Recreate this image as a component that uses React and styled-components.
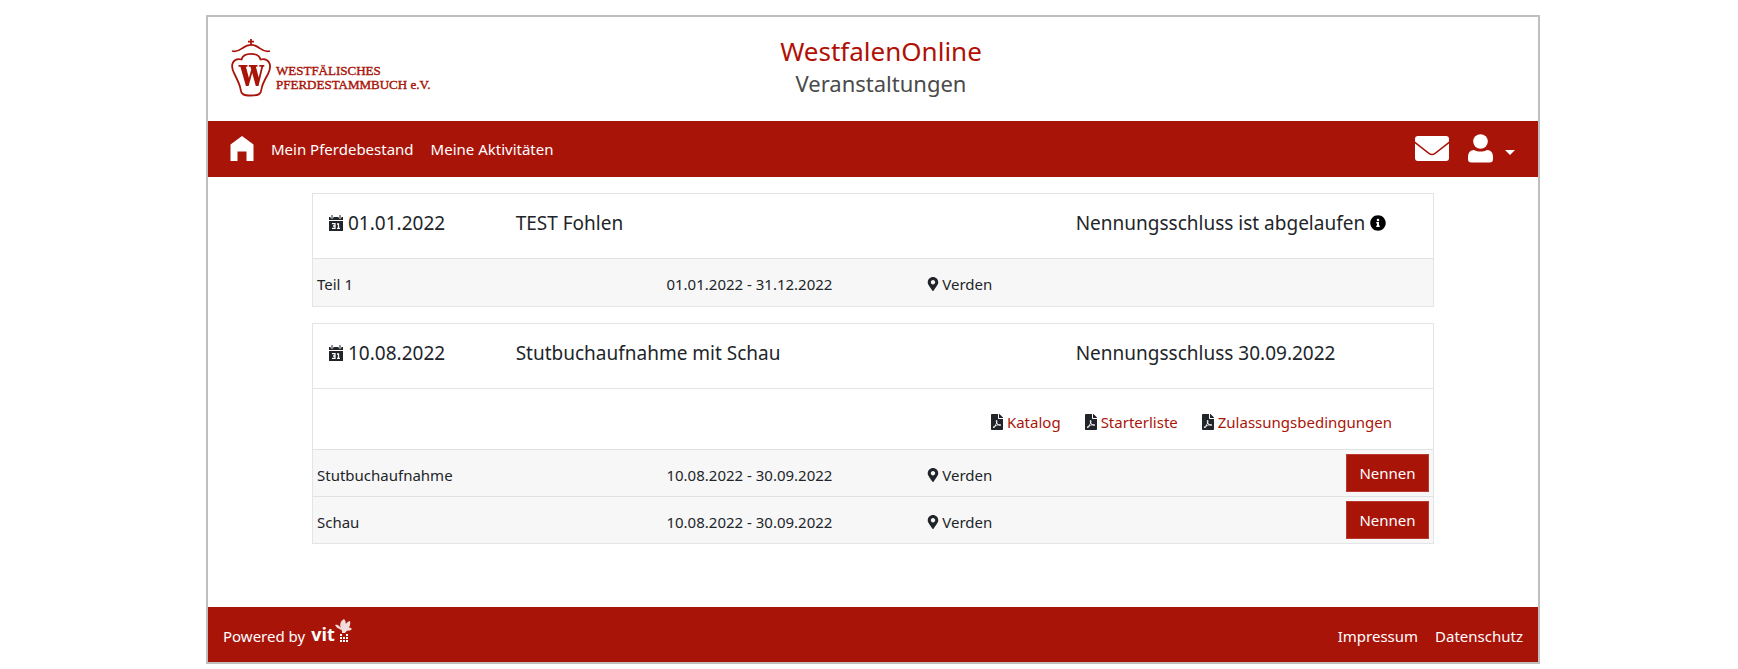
import React from "react";
import styled, { createGlobalStyle } from "styled-components";
import { FaFilePdf, FaMapMarkerAlt, FaInfoCircle } from "react-icons/fa";

const red = "#a91409";

const GlobalStyle = createGlobalStyle`
  *, *::before, *::after { box-sizing: border-box; }
  body {
    margin: 0;
    background: #fff;
    color: #212529;
    font-family: "Segoe UI", "Noto Sans", "Open Sans", sans-serif;
    font-size: 15px;
    line-height: 24px;
  }
`;

const Page = styled.div`
  margin: 15px 198px 0 206px;
  border: 2px solid #bfbfbf;
`;

const Header = styled.header`
  display: grid;
  grid-template-columns: 1fr auto 1fr;
  align-items: center;
  padding: 16px 23px 18px;
  min-height: 104px;
`;

const LogoLink = styled.a`
  display: flex;
  align-items: flex-end;
  gap: 4px;
  color: ${red};
  text-decoration: none;
`;

const LogoText = styled.span`
  padding-bottom: 5px;
  font-family: "Liberation Serif", serif;
  font-size: 13px;
  line-height: 14px;
  -webkit-text-stroke: 0.4px ${red};
`;

const Titles = styled.div`
  padding: 0 0 2px 16px;
  text-align: center;
`;

const Title = styled.h1`
  margin: 0;
  color: #b01005;
  font-size: 26px;
  font-weight: 400;
  line-height: 32px;
`;

const Subtitle = styled.h2`
  margin: 0;
  color: #4a4a4a;
  font-size: 22px;
  font-weight: 400;
  line-height: 32px;
`;

const Nav = styled.nav`
  display: flex;
  align-items: center;
  gap: 17px;
  height: 56px;
  padding: 0 23px 0 22px;
  background: ${red};
`;

const BarLink = styled.a`
  display: flex;
  align-items: center;
  color: #fff;
  text-decoration: none;
`;

const NavEnd = styled.div`
  display: flex;
  align-items: center;
  gap: 19px;
  margin-left: auto;
`;

const UserButton = styled.button`
  display: flex;
  align-items: center;
  gap: 12px;
  padding: 0;
  border: 0;
  background: none;
  color: #fff;
`;

const Caret = styled.span`
  margin-top: 6px;
  border: 5px solid transparent;
  border-top-color: #fff;
  border-bottom: 0;
`;

const Main = styled.main`
  display: flex;
  flex-direction: column;
  gap: 16px;
  padding: 16px 104px 63px;
`;

const Card = styled.section`
  border: 1px solid #e3e4e5;
`;

const CardHeader = styled.div`
  display: grid;
  grid-template-columns: 2fr 6fr 4fr;
  height: 64px;
  padding-top: 14px;
`;

const HeadCell = styled.h3`
  display: flex;
  align-items: center;
  gap: 5px;
  height: 30px;
  margin: 0;
  padding-left: 16px;
  font-size: 19px;
  font-weight: 400;
  white-space: nowrap;
`;

const Documents = styled.div`
  display: flex;
  justify-content: flex-end;
  gap: 22px;
  height: 61px;
  padding: 21px 41px 0 0;
  border-top: 1px solid #e3e4e5;
`;

const DocLink = styled.a`
  display: flex;
  align-items: center;
  gap: 2px;
  height: 24px;
  color: ${red};
  text-decoration: none;
  svg { color: #212529; }
`;

const Parts = styled.table`
  width: 100%;
  border-collapse: collapse;
  table-layout: fixed;
  background: #f7f7f7;
`;

const PartCell = styled.td`
  width: ${(p) => p.$width};
  height: 47px;
  padding: 8px 4px 4px;
  border-top: 1px solid #e0e1e2;
  white-space: nowrap;
`;

const ActionCell = styled(PartCell)`
  padding: 4px;
`;

const Place = styled.span`
  display: flex;
  align-items: center;
  gap: 2px;
`;

const EnterButton = styled.button`
  display: block;
  width: 83px;
  height: 38px;
  margin-left: auto;
  padding: 0;
  border: 1px solid #b93a31;
  background: ${red};
  color: #fff;
  font: inherit;
`;

const Footer = styled.footer`
  display: flex;
  align-items: center;
  justify-content: space-between;
  height: 55px;
  padding: 3px 15px 0;
  background: ${red};
  color: #fff;
`;

const FooterGroup = styled.div`
  display: flex;
  align-items: center;
  gap: ${(p) => p.$gap};
`;

const VitLogo = styled.span`
  display: flex;
  align-items: flex-end;
  height: 24px;
  margin-bottom: 10px;
`;

const VitText = styled.span`
  font-family: "Open Sans", sans-serif;
  font-size: 18px;
  font-weight: 700;
  line-height: 18px;
`;

const Crest = () => (
  <svg width="41" height="58" viewBox="0 0 41 58" fill="none" stroke={red} strokeWidth="1.8" aria-hidden="true">
    <path d="M20 0v6M17 2.700h6" />
    <path d="M1 12c5 1.500 8-1 11-3.200 5-3.700 11-3.700 16 0 3 2.200 6 4.700 11 3.200" />
    <path d="M10.500 20.500c2-7.500 17-7.500 19 0C37 18.500 42 25 37 35c-4 7-6 11-6.500 15-.5 5-2.500 6.500-10.500 6.500S10 55 9.500 50C9 46 7 42 3.500 35-2 25 3 18.500 10.500 20.500Z" />
    <path fill={red} stroke="none" d="M7.500 26h9v1.800h-1.600l3 11.200 2.300-8.500-.8-2.700h-1.600V26h8.700v1.800h-1.600l2.800 10.700 2.600-10.700h-2V26h5v1.800h-1.200L27.500 47h-2.700l-3.600-13-3.600 13h-2.700L9.400 27.800H7.500Z" />
  </svg>
);

const HomeIcon = () => (
  <svg width="24" height="26" viewBox="0 0 24 26" fill="currentColor" aria-hidden="true">
    <path d="M12 0 23.500 8.500V25H16.500V15.500H7.500V25H.5V8.500Z" />
  </svg>
);

const MailIcon = () => (
  <svg width="34" height="26" viewBox="0 0 34 26" fill="currentColor" aria-hidden="true">
    <path d="M3 0h28c2 0 3 1 3 3v2.500L20 16.500c-2 1.600-4 1.600-6 0L0 5.500V3c0-2 1-3 3-3Z" />
    <path d="M0 7.500 13.500 18c2.200 1.700 4.800 1.700 7 0L34 7.500V22c0 2-1 3-3 3H3c-2 0-3-1-3-3Z" />
  </svg>
);

const UserIcon = () => (
  <svg width="25" height="30" viewBox="0 0 25 30" fill="currentColor" aria-hidden="true">
    <circle cx="12.500" cy="7.500" r="7.300" />
    <path d="M6 16c4 2 9 2 13 0 4 0 6 3 6 7v2c0 2.500-1 3.500-3.500 3.500h-18C1 28.500 0 27.500 0 25v-2c0-4 2-7 6-7Z" />
  </svg>
);

const CalendarIcon = () => (
  <svg width="14" height="16" viewBox="0 0 14 16" aria-hidden="true">
    <path fill="#212529" d="M0 2h1.500c0 2 3 2 3 0h5c0 2 3 2 3 0H14v3H0zM0 6h14v10H0z" />
    <path fill="none" stroke="#212529" d="M3 0v3M11 0v3" />
    <path fill="none" stroke="#fff" strokeWidth="1.300" d="M3 8.600h3v4.800H3M4 11h2M8 9h1.500v4.500M8 13.400h3" />
  </svg>
);

const VitFlower = () => (
  <svg width="17" height="24" viewBox="0 0 17 24" fill="#fff" aria-hidden="true">
    <path opacity=".85" d="M7 11C4 7 5 2 9 0c3 3 2 8-1 12ZM9 12C9 7 11 3 15 2c1 4-1 8-5 10ZM9 14c1-5 5-7 8-4-1 1-2 2-3 1.500-2-.5-3 1-4 2.500ZM7 12C6 8 3 5 0 6c1 1 1 2 2.500 3C4 9.500 5 10 7 12ZM7 10h3v4H7Z" />
    <path d="M5 15h2v2H5zM11 15h2v2h-2zM5 18h2v2H5zM8 18h2v2H8zM11 18h2v2h-2zM5 21h2v2H5zM8 21h2v2H8zM11 21h2v2h-2z" />
  </svg>
);

const events = [
  {
    date: "01.01.2022",
    name: "TEST Fohlen",
    deadline: "Nennungsschluss ist abgelaufen",
    closed: true,
    documents: [],
    parts: [{ name: "Teil 1", period: "01.01.2022 - 31.12.2022", place: "Verden" }],
  },
  {
    date: "10.08.2022",
    name: "Stutbuchaufnahme mit Schau",
    deadline: "Nennungsschluss 30.09.2022",
    documents: ["Katalog", "Starterliste", "Zulassungsbedingungen"],
    parts: [
      { name: "Stutbuchaufnahme", period: "10.08.2022 - 30.09.2022", place: "Verden", open: true },
      { name: "Schau", period: "10.08.2022 - 30.09.2022", place: "Verden", open: true },
    ],
  },
];

const EventCard = ({ event }) => (
  <Card>
    <CardHeader>
      <HeadCell><CalendarIcon />{event.date}</HeadCell>
      <HeadCell>{event.name}</HeadCell>
      <HeadCell>
        {event.deadline}
        {event.closed && <FaInfoCircle size={16} color="#000" />}
      </HeadCell>
    </CardHeader>
    {event.documents.length > 0 && (
      <Documents>
        {event.documents.map((name) => (
          <DocLink href="#" key={name}><FaFilePdf size={16} />{name}</DocLink>
        ))}
      </Documents>
    )}
    <Parts>
      <tbody>
        {event.parts.map((part) => (
          <tr key={part.name}>
            <PartCell $width="31.2%">{part.name}</PartCell>
            <PartCell $width="23.2%">{part.period}</PartCell>
            <PartCell $width="25%"><Place><FaMapMarkerAlt size={14} />{part.place}</Place></PartCell>
            <ActionCell>{part.open && <EnterButton type="button">Nennen</EnterButton>}</ActionCell>
          </tr>
        ))}
      </tbody>
    </Parts>
  </Card>
);

export default function App() {
  return (
    <>
      <GlobalStyle />
      <Page>
        <Header>
          <LogoLink href="#">
            <Crest />
            <LogoText>WESTFÄLISCHES<br />PFERDESTAMMBUCH e.V.</LogoText>
          </LogoLink>
          <Titles>
            <Title>WestfalenOnline</Title>
            <Subtitle>Veranstaltungen</Subtitle>
          </Titles>
        </Header>
        <Nav>
          <BarLink href="#" aria-label="Startseite"><HomeIcon /></BarLink>
          <BarLink href="#">Mein Pferdebestand</BarLink>
          <BarLink href="#">Meine Aktivitäten</BarLink>
          <NavEnd>
            <BarLink href="#" aria-label="Nachrichten"><MailIcon /></BarLink>
            <UserButton type="button" aria-label="Benutzerkonto"><UserIcon /><Caret /></UserButton>
          </NavEnd>
        </Nav>
        <Main>
          {events.map((event) => <EventCard key={event.date} event={event} />)}
        </Main>
        <Footer>
          <FooterGroup $gap="6px">
            Powered by
            <VitLogo><VitText>vit</VitText><VitFlower /></VitLogo>
          </FooterGroup>
          <FooterGroup $gap="17px">
            <BarLink href="#">Impressum</BarLink>
            <BarLink href="#">Datenschutz</BarLink>
          </FooterGroup>
        </Footer>
      </Page>
    </>
  );
}
